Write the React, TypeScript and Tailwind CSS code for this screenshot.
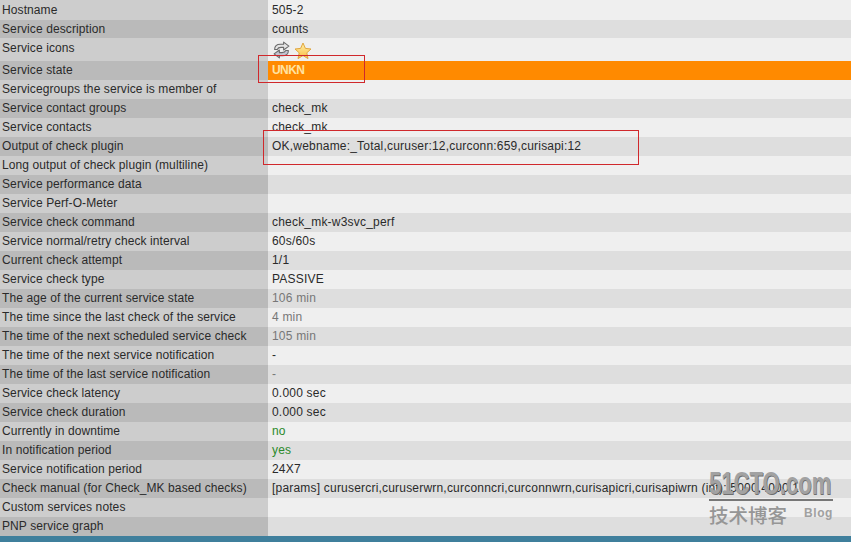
import React from 'react';

type Row = { label: string; value?: string; tone?: 'muted' | 'green'; };

const rows: Row[] = [
  { label: 'Hostname', value: '505-2' },
  { label: 'Service description', value: 'counts' },
  { label: 'Service icons' },
  { label: 'Service state' },
  { label: 'Servicegroups the service is member of' },
  { label: 'Service contact groups', value: 'check_mk' },
  { label: 'Service contacts', value: 'check_mk' },
  { label: 'Output of check plugin', value: 'OK,webname:_Total,curuser:12,curconn:659,curisapi:12' },
  { label: 'Long output of check plugin (multiline)' },
  { label: 'Service performance data' },
  { label: 'Service Perf-O-Meter' },
  { label: 'Service check command', value: 'check_mk-w3svc_perf' },
  { label: 'Service normal/retry check interval', value: '60s/60s' },
  { label: 'Current check attempt', value: '1/1' },
  { label: 'Service check type', value: 'PASSIVE' },
  { label: 'The age of the current service state', value: '106 min', tone: 'muted' },
  { label: 'The time since the last check of the service', value: '4 min', tone: 'muted' },
  { label: 'The time of the next scheduled service check', value: '105 min', tone: 'muted' },
  { label: 'The time of the next service notification', value: '-' },
  { label: 'The time of the last service notification', value: '-', tone: 'muted' },
  { label: 'Service check latency', value: '0.000 sec' },
  { label: 'Service check duration', value: '0.000 sec' },
  { label: 'Currently in downtime', value: 'no', tone: 'green' },
  { label: 'In notification period', value: 'yes', tone: 'green' },
  { label: 'Service notification period', value: '24X7' },
  { label: 'Check manual (for Check_MK based checks)', value: '[params] curusercri,curuserwrn,curconncri,curconnwrn,curisapicri,curisapiwrn (int): 5000,4000,1' },
  { label: 'Custom services notes' },
  { label: 'PNP service graph' },
];

const RefreshIcon = () => (
  <svg width="17" height="18" viewBox="0 0 16 17" fill="none">
    <path d="M1.5 8C1.5 4.5 4 3 7 3H10V1L15 4.8L10 8.5V6H7.5C5.5 6 4.5 6.6 4 8Z" fill="#e4e4e4" stroke="#6a6a6a" strokeWidth="1" strokeLinejoin="round" />
    <path d="M14.5 9C14.5 12.5 12 14 9 14H6V16L1 12.2L6 8.5V11H8.5C10.5 11 11.5 10.4 12 9Z" fill="#c4c4d2" stroke="#6a6a6a" strokeWidth="1" strokeLinejoin="round" />
  </svg>
);

const StarIcon = () => (
  <svg width="18" height="18" viewBox="0 0 18 18" className="mt-[1px]">
    <defs>
      <linearGradient id="starFill" x1="0" y1="0" x2="0" y2="1">
        <stop offset="0" stopColor="#fff0a8" />
        <stop offset="1" stopColor="#f9bd45" />
      </linearGradient>
    </defs>
    <path d="M9 1L11.4 6.4L17 7L12.8 10.8L14 16.6L9 13.6L4 16.6L5.2 10.8L1 7L6.6 6.4Z" fill="url(#starFill)" stroke="#e0a640" strokeWidth="1" strokeLinejoin="round" />
  </svg>
);

export default function App() {
  return (
    <div className="relative h-[542px] w-[851px] overflow-hidden bg-[#3f7f9c] font-['Liberation_Sans',Arial,sans-serif] text-[12px] text-[#2a2a2a]">
      <div className="flex flex-col">
        {rows.map((row, i) => {
          const odd = i % 2 === 1;
          const isIcons = row.label === 'Service icons';
          const isState = row.label === 'Service state';
          // the top three rows of the table are not the regular 19px
          const height = i === 0 ? 'h-[20px]' : i === 1 ? 'h-[18px]' : isIcons ? 'h-[23px]' : 'h-[19px]';
          const shift = i < 2 ? '' : 'pb-[2px]';
          return (
            <div key={row.label} className={`flex ${height}`}>
              <div className={`flex w-[268px] shrink-0 items-center pl-[2px] tracking-[0.1px] ${odd ? 'bg-[#bababa]' : 'bg-[#cdcdcd]'} ${isIcons ? 'pb-[4px]' : shift}`}>
                {row.label}
              </div>
              {isState ? (
                <div className="flex flex-1 items-center bg-[#ff8a00] pb-[2px] pl-[4px] font-bold tracking-[-0.6px] text-[#ffe3a0]">UNKN</div>
              ) : isIcons ? (
                <div className="flex flex-1 items-start gap-[4px] bg-[#efefef] pl-[5px] pt-[3px]">
                  <RefreshIcon />
                  <StarIcon />
                </div>
              ) : (
                <div
                  className={`flex flex-1 items-center whitespace-nowrap pl-[4px] tracking-[0.2px] ${shift} ${odd ? 'bg-[#dedede]' : 'bg-[#efefef]'} ${
                    row.tone === 'muted' ? 'text-[#777777]' : row.tone === 'green' ? 'text-[#2c8a2c]' : ''
                  }`}
                >
                  {row.value}
                </div>
              )}
            </div>
          );
        })}
      </div>

      {/* annotation boxes drawn on the screenshot */}
      <div className="absolute left-[258px] top-[55px] h-[28px] w-[107px] border border-[#d0282c]" />
      <div className="absolute left-[263px] top-[130px] h-[35px] w-[376px] border border-[#d0282c]" />

      {/* watermark */}
      <div className="absolute left-[709px] top-[466px] flex w-[124px] flex-col">
        <div className="h-[33px] origin-left scale-x-[0.69] whitespace-nowrap text-[32px] font-bold leading-[35px] text-[#a2a2a2] [text-shadow:1px_1px_0_#6e6e6e]">
          51CTO.com
        </div>
        <div className="h-[2px] bg-[#777777]" />
        <div className="mt-[2px] flex items-start justify-between">
          <span className="font-['Noto_Sans_CJK_SC',sans-serif] text-[19.5px] font-medium leading-[24px] text-[#969696]">技术博客</span>
          <span className="pt-[2px] text-[12px] font-bold leading-[16px] tracking-[0.6px] text-[#a0a0a0]">Blog</span>
        </div>
      </div>
    </div>
  );
}
